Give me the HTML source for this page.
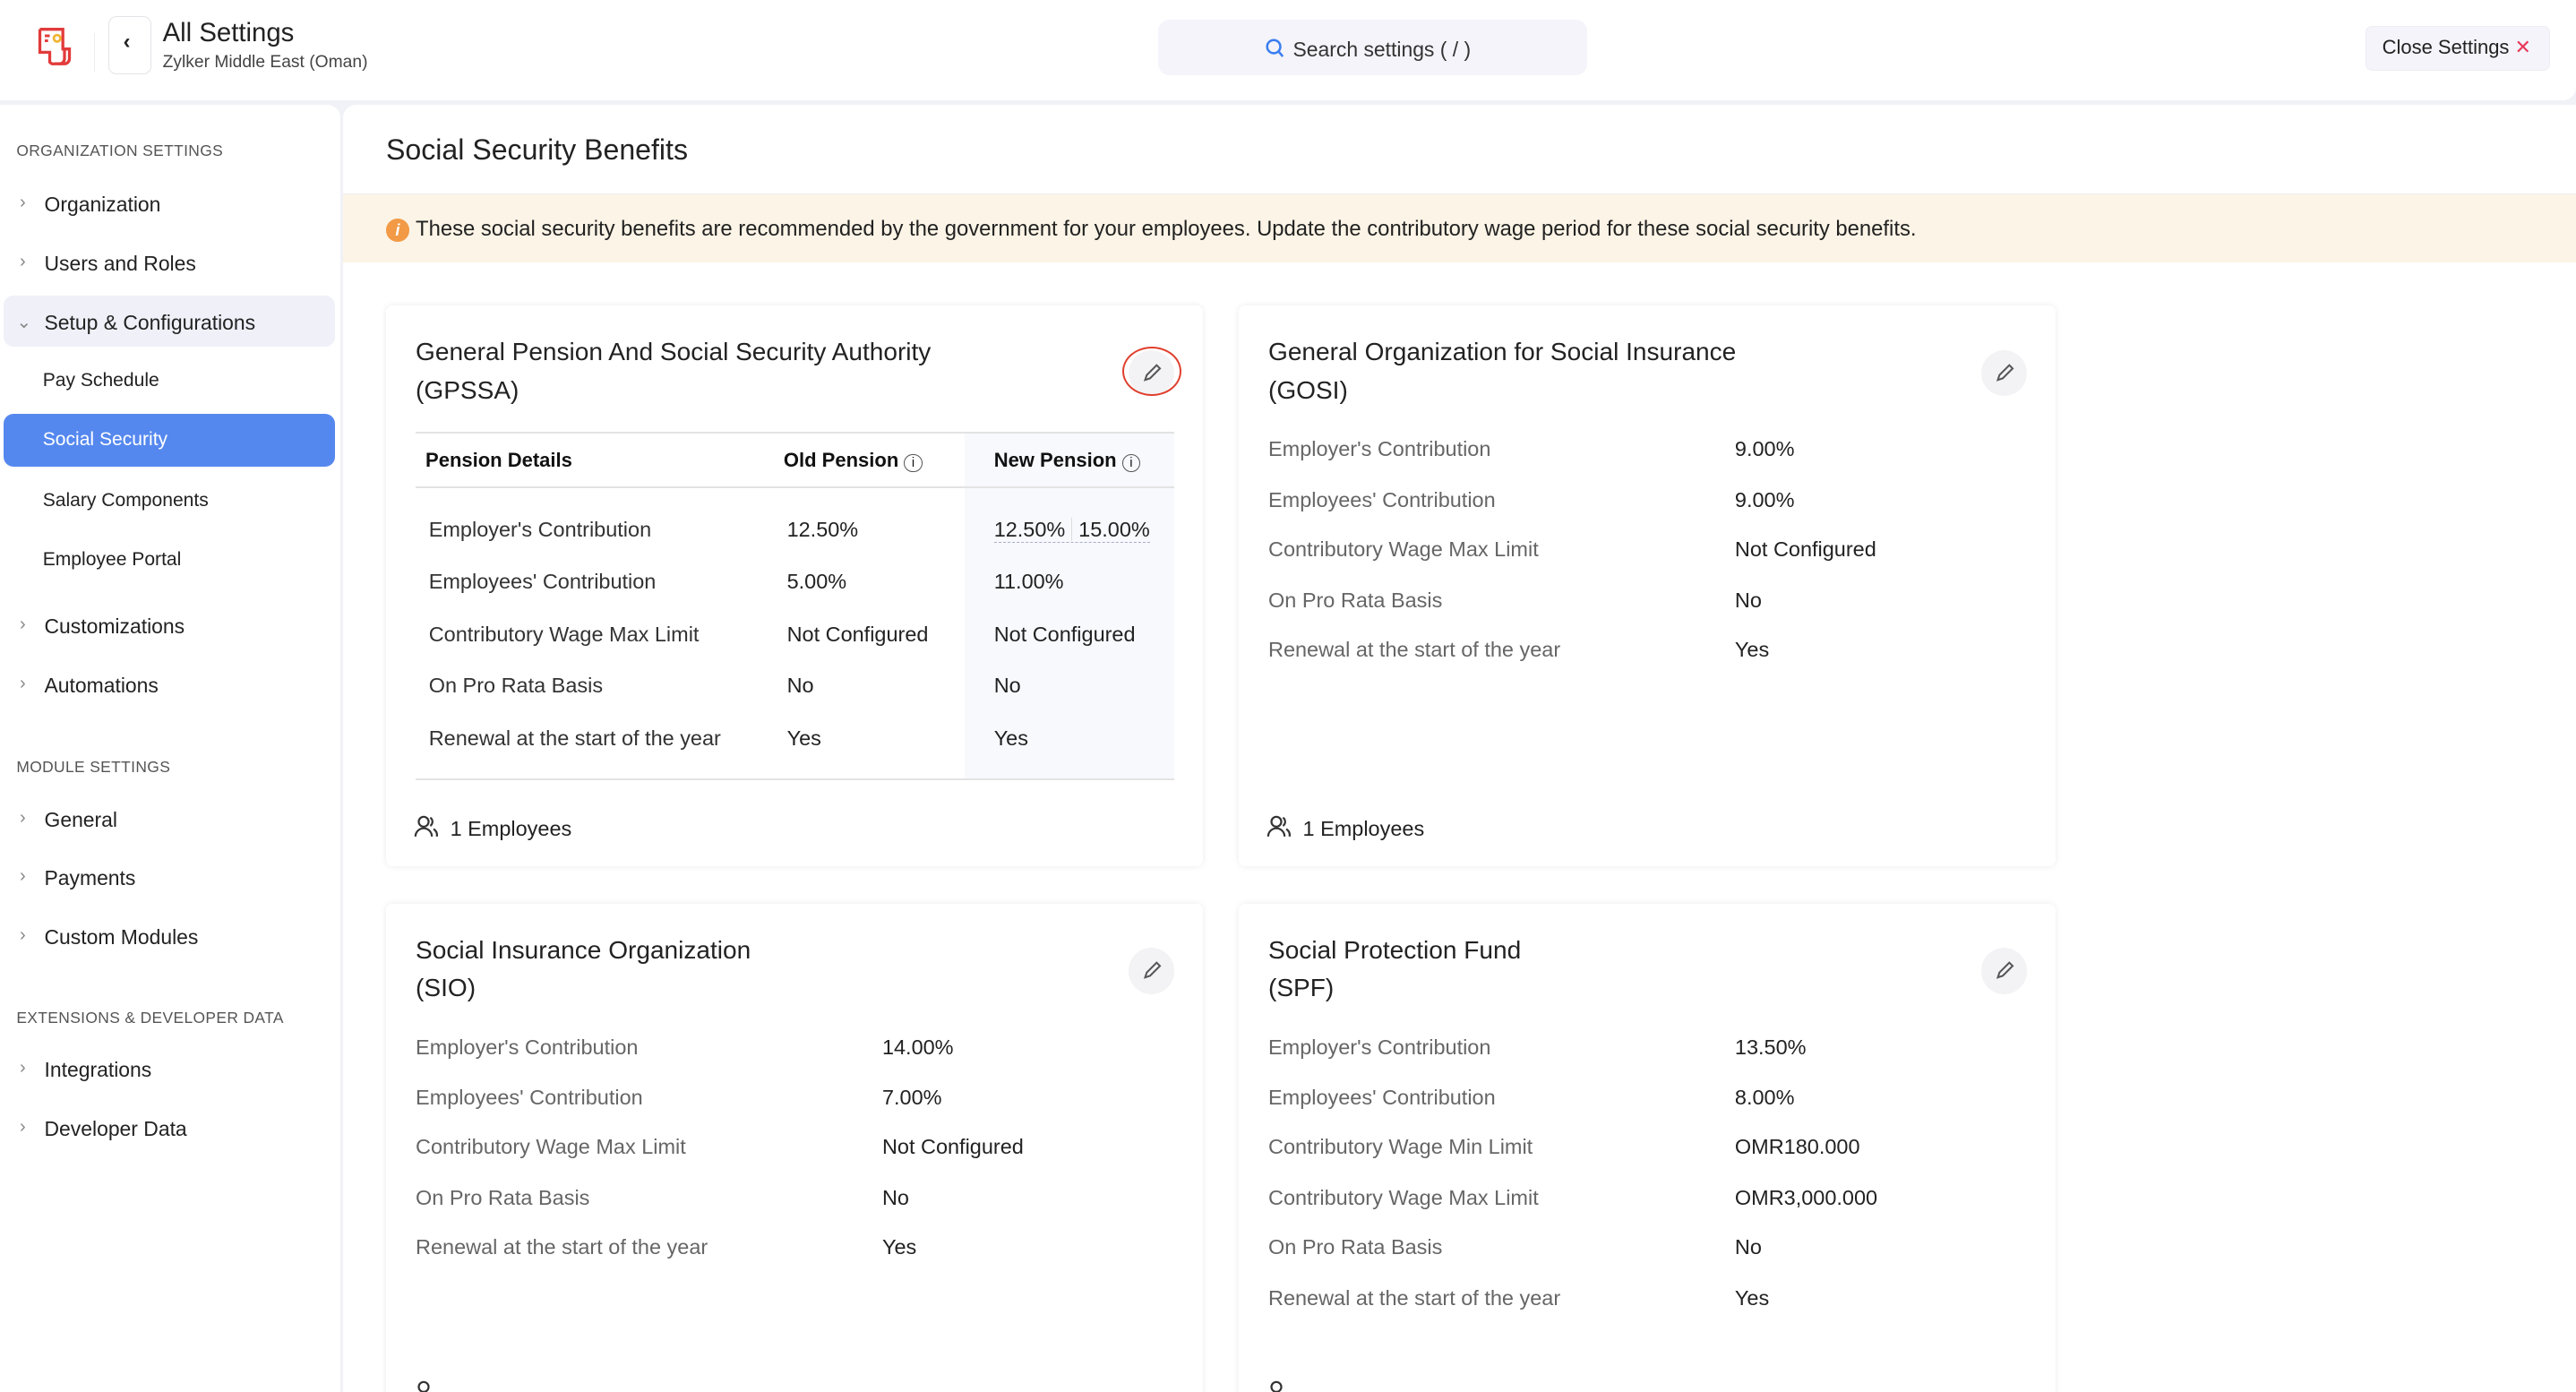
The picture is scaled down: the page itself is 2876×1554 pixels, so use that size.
<!DOCTYPE html>
<html style="overflow:hidden"><head><meta charset="utf-8"><style>
html{zoom:1.8342;background:#f1f2f7}
body{margin:0;width:1568px;height:847px;overflow:hidden;background:#f1f2f7;font-family:"Liberation Sans",sans-serif;color:#222;position:relative}
.a{position:absolute;white-space:nowrap}
.hdr{left:0;top:0;width:1568px;height:61px;background:#fff;border-radius:0 0 8px 0}
.side{left:0;top:64px;width:207px;height:783px;background:#fff;border-radius:0 8px 0 0}
.main{left:209px;top:64px;width:1359px;height:783px;background:#fff;border-radius:8px 0 0 0}
.sec{font-size:9.5px;color:#555;letter-spacing:.2px}
.it{font-size:12.5px;color:#222}
.chev{font-size:11px;color:#888}
.card{background:#fff;border-radius:4px;box-shadow:0 0 4px rgba(0,0,0,.08);width:497px}
.t{font-size:15.3px;color:#222;line-height:23px}
.lb{font-size:12.8px;color:#666}
.v{font-size:12.8px;color:#222}
.ed{width:28px;height:28px;border-radius:50%;background:#f3f3f5}
</style></head><body>
<div class="a hdr"></div>
<svg class="a" style="left:21px;top:16px" width="24" height="25" viewBox="0 0 24 25"><path d="M3 2h14v12h4v6a3 3 0 0 1-3 3h-3" fill="none" stroke="#e23b3b" stroke-width="1.8"/><path d="M3 2v14h6v6a3 3 0 0 0 3 1h3a3 3 0 0 0 3-3v-6" fill="none" stroke="#e23b3b" stroke-width="1.8"/><path d="M6 6h3M6 9h2" stroke="#e23b3b" stroke-width="1.6"/><circle cx="13.5" cy="7.5" r="2" fill="none" stroke="#f1b434" stroke-width="1.5"/></svg>
<div class="a" style="left:57px;top:20px;width:1px;height:24px;background:#eee"></div>
<div class="a" style="left:66px;top:10px;width:25px;height:34px;border:1px solid #e4e4e8;border-radius:5px"></div>
<div class="a" style="left:75px;top:18px;font-size:13px;font-weight:bold">‹</div>
<div class="a" style="left:99px;top:11px;font-size:16px;color:#222">All Settings</div>
<div class="a" style="left:99px;top:32px;font-size:10.5px;color:#444">Zylker Middle East (Oman)</div>
<div class="a" style="left:705px;top:12px;width:261px;height:34px;background:#f4f4fa;border-radius:7px"></div>
<svg class="a" style="left:770px;top:23px" width="12" height="13"><circle cx="5.5" cy="5.5" r="4" fill="none" stroke="#3b7ef0" stroke-width="1.4"/><path d="M8.5 8.5l2.5 3" stroke="#3b7ef0" stroke-width="1.4"/></svg>
<div class="a" style="left:787px;top:23px;font-size:12.5px;color:#333">Search settings ( / )</div>
<div class="a" style="left:1440px;top:16px;width:112px;height:27px;background:#f4f4fa;border:1px solid #eceef3;border-radius:4px;box-sizing:border-box"></div>
<div class="a" style="left:1450px;top:22px;font-size:12px;color:#222">Close Settings <span style="color:#e8385a">✕</span></div>

<div class="a side"></div>
<div class="a sec" style="left:10px;top:86px">ORGANIZATION SETTINGS</div>
<div class="a chev" style="left:12px;top:117px">›</div><div class="a it" style="left:27px;top:117px">Organization</div>
<div class="a chev" style="left:12px;top:153px">›</div><div class="a it" style="left:27px;top:153px">Users and Roles</div>
<div class="a" style="left:2px;top:180px;width:202px;height:31px;background:#eff0f8;border-radius:6px"></div>
<div class="a chev" style="left:10px;top:189px">⌄</div><div class="a it" style="left:27px;top:189px">Setup &amp; Configurations</div>
<div class="a it" style="left:26px;top:225px;font-size:11.5px">Pay Schedule</div>
<div class="a" style="left:2px;top:252px;width:202px;height:32px;background:#5588ef;border-radius:6px"></div>
<div class="a it" style="left:26px;top:261px;font-size:11.5px;color:#fff">Social Security</div>
<div class="a it" style="left:26px;top:298px;font-size:11.5px">Salary Components</div>
<div class="a it" style="left:26px;top:334px;font-size:11.5px">Employee Portal</div>
<div class="a chev" style="left:12px;top:374px">›</div><div class="a it" style="left:27px;top:374px">Customizations</div>
<div class="a chev" style="left:12px;top:410px">›</div><div class="a it" style="left:27px;top:410px">Automations</div>
<div class="a sec" style="left:10px;top:461px">MODULE SETTINGS</div>
<div class="a chev" style="left:12px;top:492px">›</div><div class="a it" style="left:27px;top:492px">General</div>
<div class="a chev" style="left:12px;top:527px">›</div><div class="a it" style="left:27px;top:527px">Payments</div>
<div class="a chev" style="left:12px;top:563px">›</div><div class="a it" style="left:27px;top:563px">Custom Modules</div>
<div class="a sec" style="left:10px;top:614px">EXTENSIONS &amp; DEVELOPER DATA</div>
<div class="a chev" style="left:12px;top:644px">›</div><div class="a it" style="left:27px;top:644px">Integrations</div>
<div class="a chev" style="left:12px;top:680px">›</div><div class="a it" style="left:27px;top:680px">Developer Data</div>

<div class="a main"></div>
<div class="a" style="left:235px;top:81px;font-size:17.5px;color:#222">Social Security Benefits</div>
<div class="a" style="left:209px;top:118px;width:1359px;height:41px;background:#fcf4e6;border-top:1px solid #eee"></div>
<div class="a" style="left:235px;top:133px;width:14px;height:14px;border-radius:50%;background:#f29a45;color:#fff;font-size:10px;font-style:italic;font-weight:bold;text-align:center;line-height:14px">i</div>
<div class="a" style="left:253px;top:132px;font-size:13px;color:#222">These social security benefits are recommended by the government for your employees. Update the contributory wage period for these social security benefits.</div>

<!-- card1 -->
<div class="a card" style="left:235px;top:186px;height:341px"></div>
<div class="a t" style="left:253px;top:203px">General Pension And Social Security Authority<br>(GPSSA)</div>
<div class="a ed" style="left:687px;top:213px"></div>
<div class="a" style="left:683px;top:211px;width:36px;height:30px;border:1.5px solid #e0402e;border-radius:50%;box-sizing:border-box"></div>
<div class="a" style="left:587px;top:264px;width:128px;height:210px;background:#f8f9fd"></div>
<div class="a" style="left:253px;top:263px;width:462px;height:1px;background:#e3e3e3"></div>
<div class="a" style="left:253px;top:296px;width:462px;height:1px;background:#e3e3e3"></div>
<div class="a" style="left:253px;top:474px;width:462px;height:1px;background:#e3e3e3"></div>
<div class="a v" style="left:259px;top:273px;font-weight:bold;color:#111;font-size:12px">Pension Details</div>
<div class="a v" style="left:477px;top:273px;font-weight:bold;color:#111;font-size:12px">Old Pension <span style="display:inline-block;width:10px;height:10px;border:1px solid #555;border-radius:50%;font-size:8px;line-height:10px;text-align:center;font-weight:normal">i</span></div>
<div class="a v" style="left:605px;top:273px;font-weight:bold;color:#111;font-size:12px">New Pension <span style="display:inline-block;width:10px;height:10px;border:1px solid #555;border-radius:50%;font-size:8px;line-height:10px;text-align:center;font-weight:normal">i</span></div>
<div class="a v" style="left:261px;top:315px;color:#333">Employer's Contribution</div><div class="a v" style="left:479px;top:315px">12.50%</div><div class="a v" style="left:605px;top:315px;border-bottom:1px dashed #aac">12.50% <span style="border-left:1px solid #ddd;padding-left:4px">15.00%</span></div>
<div class="a v" style="left:261px;top:347px;color:#333">Employees' Contribution</div><div class="a v" style="left:479px;top:347px">5.00%</div><div class="a v" style="left:605px;top:347px">11.00%</div>
<div class="a v" style="left:261px;top:379px;color:#333">Contributory Wage Max Limit</div><div class="a v" style="left:479px;top:379px">Not Configured</div><div class="a v" style="left:605px;top:379px">Not Configured</div>
<div class="a v" style="left:261px;top:410px;color:#333">On Pro Rata Basis</div><div class="a v" style="left:479px;top:410px">No</div><div class="a v" style="left:605px;top:410px">No</div>
<div class="a v" style="left:261px;top:442px;color:#333">Renewal at the start of the year</div><div class="a v" style="left:479px;top:442px">Yes</div><div class="a v" style="left:605px;top:442px">Yes</div>
<svg class="a" style="left:252px;top:496px" width="15" height="14"><circle cx="6" cy="4" r="3" fill="none" stroke="#333" stroke-width="1.2"/><path d="M1 13a5 5 0 0 1 10 0M10 1.5a3 3 0 0 1 0 5M12 8.5a4 4 0 0 1 2 4.5" fill="none" stroke="#333" stroke-width="1.2"/></svg>
<div class="a v" style="left:274px;top:497px">1 Employees</div>

<!-- card2 -->
<div class="a card" style="left:754px;top:186px;height:341px"></div>
<div class="a t" style="left:772px;top:203px">General Organization for Social Insurance<br>(GOSI)</div>
<div class="a ed" style="left:1206px;top:213px"></div>
<div class="a lb" style="left:772px;top:266px">Employer's Contribution</div><div class="a v" style="left:1056px;top:266px">9.00%</div>
<div class="a lb" style="left:772px;top:297px">Employees' Contribution</div><div class="a v" style="left:1056px;top:297px">9.00%</div>
<div class="a lb" style="left:772px;top:327px">Contributory Wage Max Limit</div><div class="a v" style="left:1056px;top:327px">Not Configured</div>
<div class="a lb" style="left:772px;top:358px">On Pro Rata Basis</div><div class="a v" style="left:1056px;top:358px">No</div>
<div class="a lb" style="left:772px;top:388px">Renewal at the start of the year</div><div class="a v" style="left:1056px;top:388px">Yes</div>
<svg class="a" style="left:771px;top:496px" width="15" height="14"><circle cx="6" cy="4" r="3" fill="none" stroke="#333" stroke-width="1.2"/><path d="M1 13a5 5 0 0 1 10 0M10 1.5a3 3 0 0 1 0 5M12 8.5a4 4 0 0 1 2 4.5" fill="none" stroke="#333" stroke-width="1.2"/></svg>
<div class="a v" style="left:793px;top:497px">1 Employees</div>

<!-- card3 -->
<div class="a card" style="left:235px;top:550px;height:310px"></div>
<div class="a t" style="left:253px;top:567px">Social Insurance Organization<br>(SIO)</div>
<div class="a ed" style="left:687px;top:577px"></div>
<div class="a lb" style="left:253px;top:630px">Employer's Contribution</div><div class="a v" style="left:537px;top:630px">14.00%</div>
<div class="a lb" style="left:253px;top:661px">Employees' Contribution</div><div class="a v" style="left:537px;top:661px">7.00%</div>
<div class="a lb" style="left:253px;top:691px">Contributory Wage Max Limit</div><div class="a v" style="left:537px;top:691px">Not Configured</div>
<div class="a lb" style="left:253px;top:722px">On Pro Rata Basis</div><div class="a v" style="left:537px;top:722px">No</div>
<div class="a lb" style="left:253px;top:752px">Renewal at the start of the year</div><div class="a v" style="left:537px;top:752px">Yes</div>

<!-- card4 -->
<div class="a card" style="left:754px;top:550px;height:310px"></div>
<div class="a t" style="left:772px;top:567px">Social Protection Fund<br>(SPF)</div>
<div class="a ed" style="left:1206px;top:577px"></div>
<div class="a lb" style="left:772px;top:630px">Employer's Contribution</div><div class="a v" style="left:1056px;top:630px">13.50%</div>
<div class="a lb" style="left:772px;top:661px">Employees' Contribution</div><div class="a v" style="left:1056px;top:661px">8.00%</div>
<div class="a lb" style="left:772px;top:691px">Contributory Wage Min Limit</div><div class="a v" style="left:1056px;top:691px">OMR180.000</div>
<div class="a lb" style="left:772px;top:722px">Contributory Wage Max Limit</div><div class="a v" style="left:1056px;top:722px">OMR3,000.000</div>
<div class="a lb" style="left:772px;top:752px">On Pro Rata Basis</div><div class="a v" style="left:1056px;top:752px">No</div>
<div class="a lb" style="left:772px;top:783px">Renewal at the start of the year</div><div class="a v" style="left:1056px;top:783px">Yes</div>
<svg class="a" style="left:252px;top:840px" width="15" height="14"><circle cx="6" cy="4" r="3" fill="none" stroke="#333" stroke-width="1.2"/></svg>
<svg class="a" style="left:771px;top:840px" width="15" height="14"><circle cx="6" cy="4" r="3" fill="none" stroke="#333" stroke-width="1.2"/></svg>

<svg class="a" style="left:694px;top:220px" width="14" height="14"><path d="M3 11l1-3 6-6 2 2-6 6z" fill="none" stroke="#555" stroke-width="1.1"/></svg>
<svg class="a" style="left:1213px;top:220px" width="14" height="14"><path d="M3 11l1-3 6-6 2 2-6 6z" fill="none" stroke="#555" stroke-width="1.1"/></svg>
<svg class="a" style="left:694px;top:584px" width="14" height="14"><path d="M3 11l1-3 6-6 2 2-6 6z" fill="none" stroke="#555" stroke-width="1.1"/></svg>
<svg class="a" style="left:1213px;top:584px" width="14" height="14"><path d="M3 11l1-3 6-6 2 2-6 6z" fill="none" stroke="#555" stroke-width="1.1"/></svg>
</body></html>
